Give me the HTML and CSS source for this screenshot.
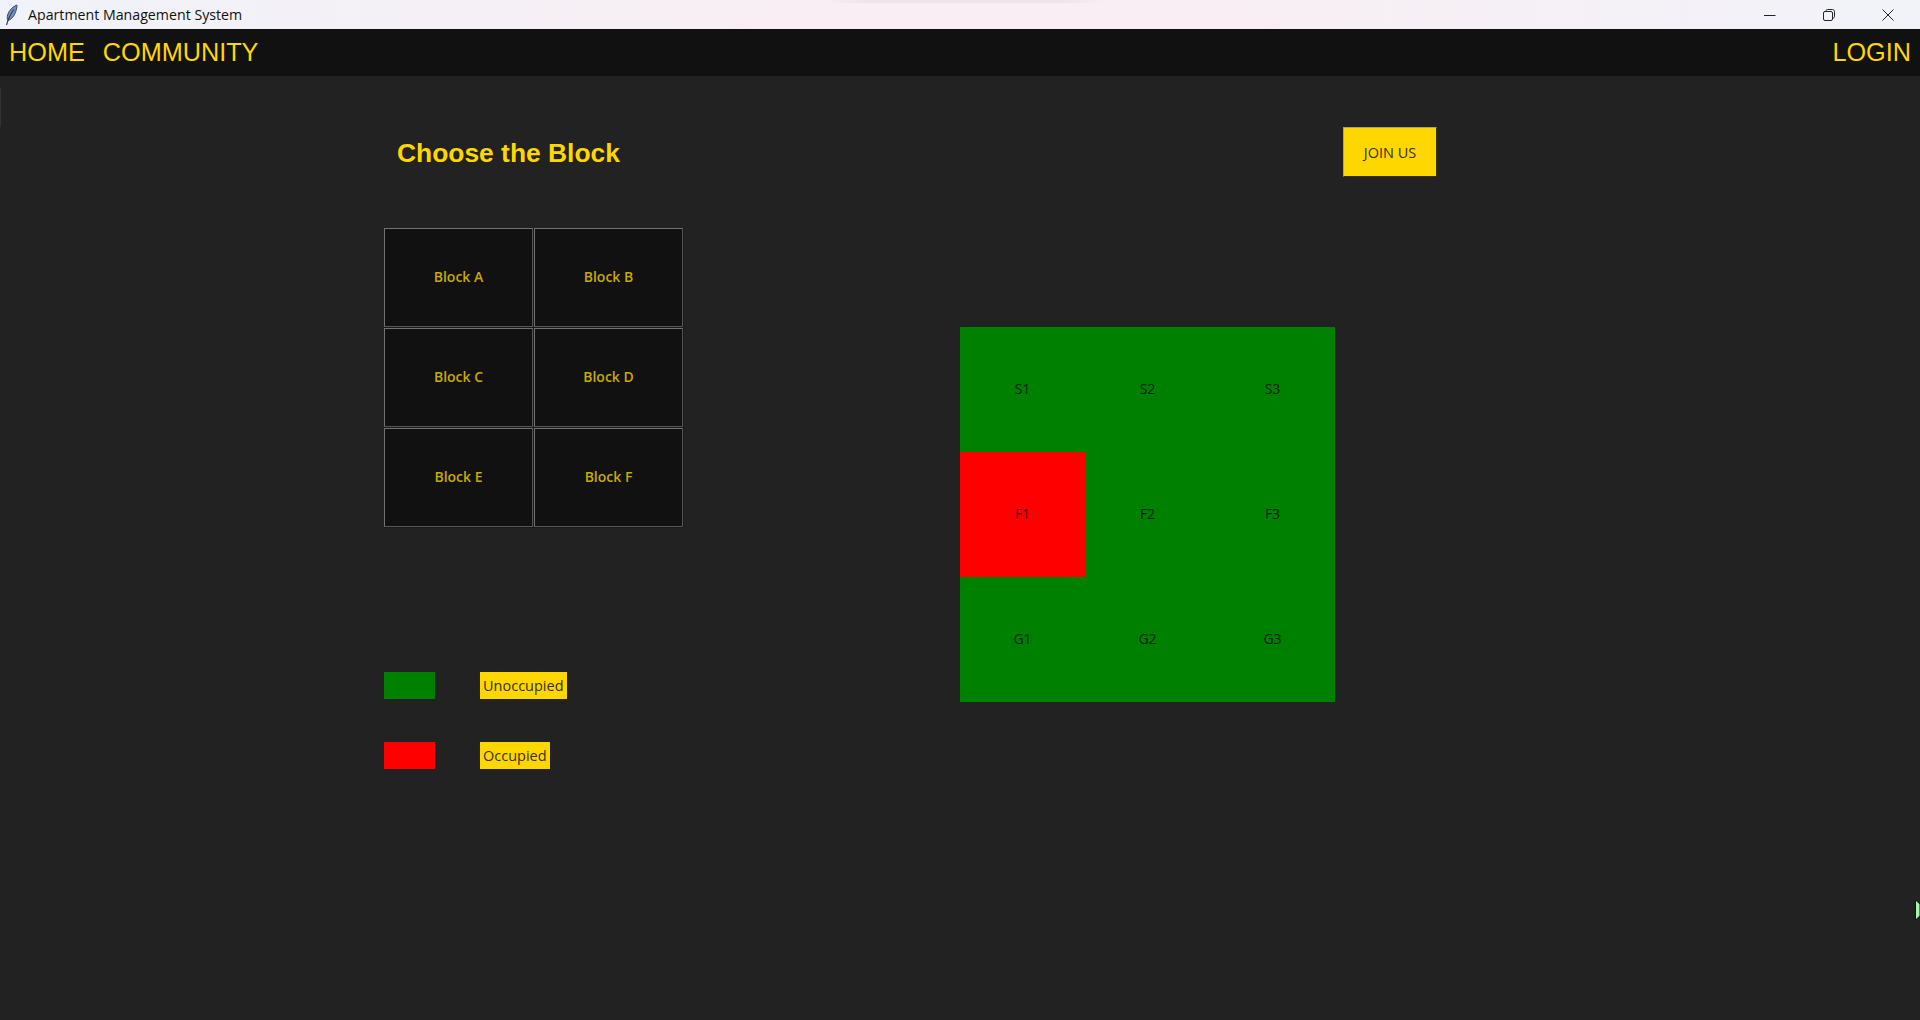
FILE: index.html
```html
<!DOCTYPE html>
<html lang="en">

<head>
    <meta charset="UTF-8">
    <title>Apartment Management System</title>
    <link rel="stylesheet" href="styles.css">
</head>

<body>
    <div class="titlebar">
        <svg class="app-icon" width="18" height="22" viewBox="0 0 18 22">
            <path d="M14 1C9.5 2.5 6 6.5 4.6 11C4 13.5 4.2 15 4.8 16.5C8 15.5 10.5 13 12 9.5C13.3 6.5 14 3.5 14 1Z" fill="#6f93c4" stroke="#3b4d68" stroke-width="1"/>
            <path d="M11 5.5C8 9 5.5 14 3.5 21" fill="none" stroke="#2a3648" stroke-width="1.1"/>
        </svg>
        <span class="app-title">Apartment Management System</span>
        <div class="window-controls">
            <svg width="12" height="12" viewBox="0 0 12 12"><path d="M0 6.5H11.5" stroke="#222" stroke-width="1"/></svg>
            <svg width="12" height="12" viewBox="0 0 12 12"><path d="M3 2.5V2C3 1 3.7 .5 4.5 .5H9.5C10.7 .5 11.5 1.3 11.5 2.5V7.5C11.5 8.3 11 9 10 9H9.5" fill="none" stroke="#222"/><rect x=".5" y="2.5" width="9" height="9" rx="1.5" fill="none" stroke="#222"/></svg>
            <svg width="12" height="12" viewBox="0 0 12 12"><path d="M.5 .5L11.5 11.5M11.5 .5L.5 11.5" stroke="#222" stroke-width="1"/></svg>
        </div>
    </div>

    <nav class="menu">
        <a class="menu-item">HOME</a>
        <a class="menu-item">COMMUNITY</a>
        <a class="menu-item login">LOGIN</a>
    </nav>

    <main class="content">
        <div class="top-row">
            <h1 class="heading">Choose the Block</h1>
            <button class="join-btn">JOIN US</button>
        </div>

        <div class="columns">
            <div class="left-col">
                <div class="block-grid">
                    <button class="block-btn">Block A</button>
                    <button class="block-btn">Block B</button>
                    <button class="block-btn">Block C</button>
                    <button class="block-btn">Block D</button>
                    <button class="block-btn">Block E</button>
                    <button class="block-btn">Block F</button>
                </div>

                <div class="legend">
                    <div class="legend-row">
                        <span class="swatch green"></span>
                        <span class="legend-label">Unoccupied</span>
                    </div>
                    <div class="legend-row">
                        <span class="swatch red"></span>
                        <span class="legend-label">Occupied</span>
                    </div>
                </div>
            </div>

            <div class="flat-grid">
                <div class="flat">S1</div>
                <div class="flat">S2</div>
                <div class="flat">S3</div>
                <div class="flat taken">F1</div>
                <div class="flat">F2</div>
                <div class="flat">F3</div>
                <div class="flat">G1</div>
                <div class="flat">G2</div>
                <div class="flat">G3</div>
            </div>
        </div>
    </main>

    <div class="title-glow"></div>
    <div class="edge-mark"></div>
    <svg class="cursor-mark" width="5" height="20" viewBox="0 0 5 20">
        <path d="M.5 0V20L1.5 19L5 16V4L1.5 1Z" fill="#a9f5a9" stroke="#111" stroke-width="1"/>
    </svg>
</body>

</html>
```

FILE: styles.css
```css
* {
    box-sizing: border-box;
}

html,
body {
    height: 100%;
}

body {
    margin: 0;
    overflow: hidden;
    background-color: #222;
    font-family: "Open Sans", "Noto Sans", sans-serif;
}

.titlebar {
    display: flex;
    align-items: center;
    height: 29px;
    padding-left: 3px;
    background: linear-gradient(90deg, #f0f3f9 0%, #f9eef3 45%, #f9eef3 60%, #f1f3f9 100%);
    color: #111;
}

.app-icon {
    flex: none;
}

.app-title {
    margin-left: 7px;
    font-family: "Open Sans", sans-serif;
    font-size: 14.2px;
}

.window-controls {
    display: flex;
    gap: 47px;
    margin-left: auto;
    padding-right: 26px;
}

.title-glow {
    position: absolute;
    left: 825px;
    top: 0;
    width: 280px;
    height: 3px;
    background: linear-gradient(90deg, transparent, rgba(120, 90, 100, .07) 15%, rgba(120, 90, 100, .07) 85%, transparent);
}

.menu {
    display: flex;
    align-items: center;
    gap: 18px;
    height: 47px;
    padding: 0 9px;
    background-color: #111;
}

.menu-item {
    font-family: "Liberation Sans", Arial, sans-serif;
    font-size: 25.25px;
    color: #ffd700;
}

.login {
    margin-left: auto;
}

.content {
    padding: 51px 0 0 384px;
}

.top-row {
    display: flex;
    align-items: center;
    height: 50px;
}

.heading {
    width: 959px;
    margin: 0;
    padding: 2px 0 0 13px;
    font-family: "Liberation Sans", Arial, sans-serif;
    font-size: 26.4px;
    font-weight: bold;
    color: #ffd700;
}

.join-btn {
    width: 94px;
    height: 50px;
    padding: 0;
    border: 1px solid #a8a86a;
    border-right-color: #3a3300;
    border-bottom-color: #3a3300;
    background-color: #ffd700;
    font-family: "Open Sans", sans-serif;
    font-size: 14.5px;
    color: #3a3000;
}

.columns {
    display: flex;
    align-items: flex-start;
    margin-top: 51px;
}

.left-col {
    width: 576px;
}

.block-grid {
    display: grid;
    grid-template-columns: repeat(2, 149px);
    grid-auto-rows: 99px;
    gap: 1px;
    width: 300px;
    padding: 0 1px 1px 0;
    background-color: #1a1a1a;
}

.block-btn {
    padding: 0 0 2px;
    border: 1px solid #727272;
    border-right-color: #555;
    border-bottom-color: #555;
    background-color: #111;
    font-family: "Open Sans", sans-serif;
    font-size: 14px;
    font-weight: 600;
    color: #c8aa00;
}

.legend {
    display: flex;
    flex-direction: column;
    gap: 43px;
    margin-top: 144px;
}

.legend-row {
    display: flex;
    align-items: center;
    height: 27px;
}

.swatch {
    width: 51px;
    height: 27px;
    margin-right: 45px;
}

.swatch.green {
    background-color: #008000;
}

.swatch.red {
    background-color: #f00;
}

.legend-label {
    display: flex;
    align-items: center;
    height: 27px;
    padding: 0 3px;
    background-color: #ffd700;
    font-family: "Open Sans", sans-serif;
    font-size: 14.5px;
    font-weight: 500;
    color: #3a3000;
}

.flat-grid {
    display: grid;
    grid-template-columns: repeat(3, 125px);
    grid-auto-rows: 125px;
    margin-top: 99px;
    background-color: #008000;
}

.flat {
    display: flex;
    align-items: center;
    justify-content: center;
    padding-bottom: 3px;
    font-family: "Open Sans", sans-serif;
    font-size: 14px;
    color: #001f00;
}

.taken {
    background-color: #f00;
    color: #5a0000;
}

.edge-mark {
    position: absolute;
    left: 0;
    top: 88px;
    width: 1px;
    height: 39px;
    background-color: #333;
}

.cursor-mark {
    position: absolute;
    right: 0;
    top: 900px;
}
```
